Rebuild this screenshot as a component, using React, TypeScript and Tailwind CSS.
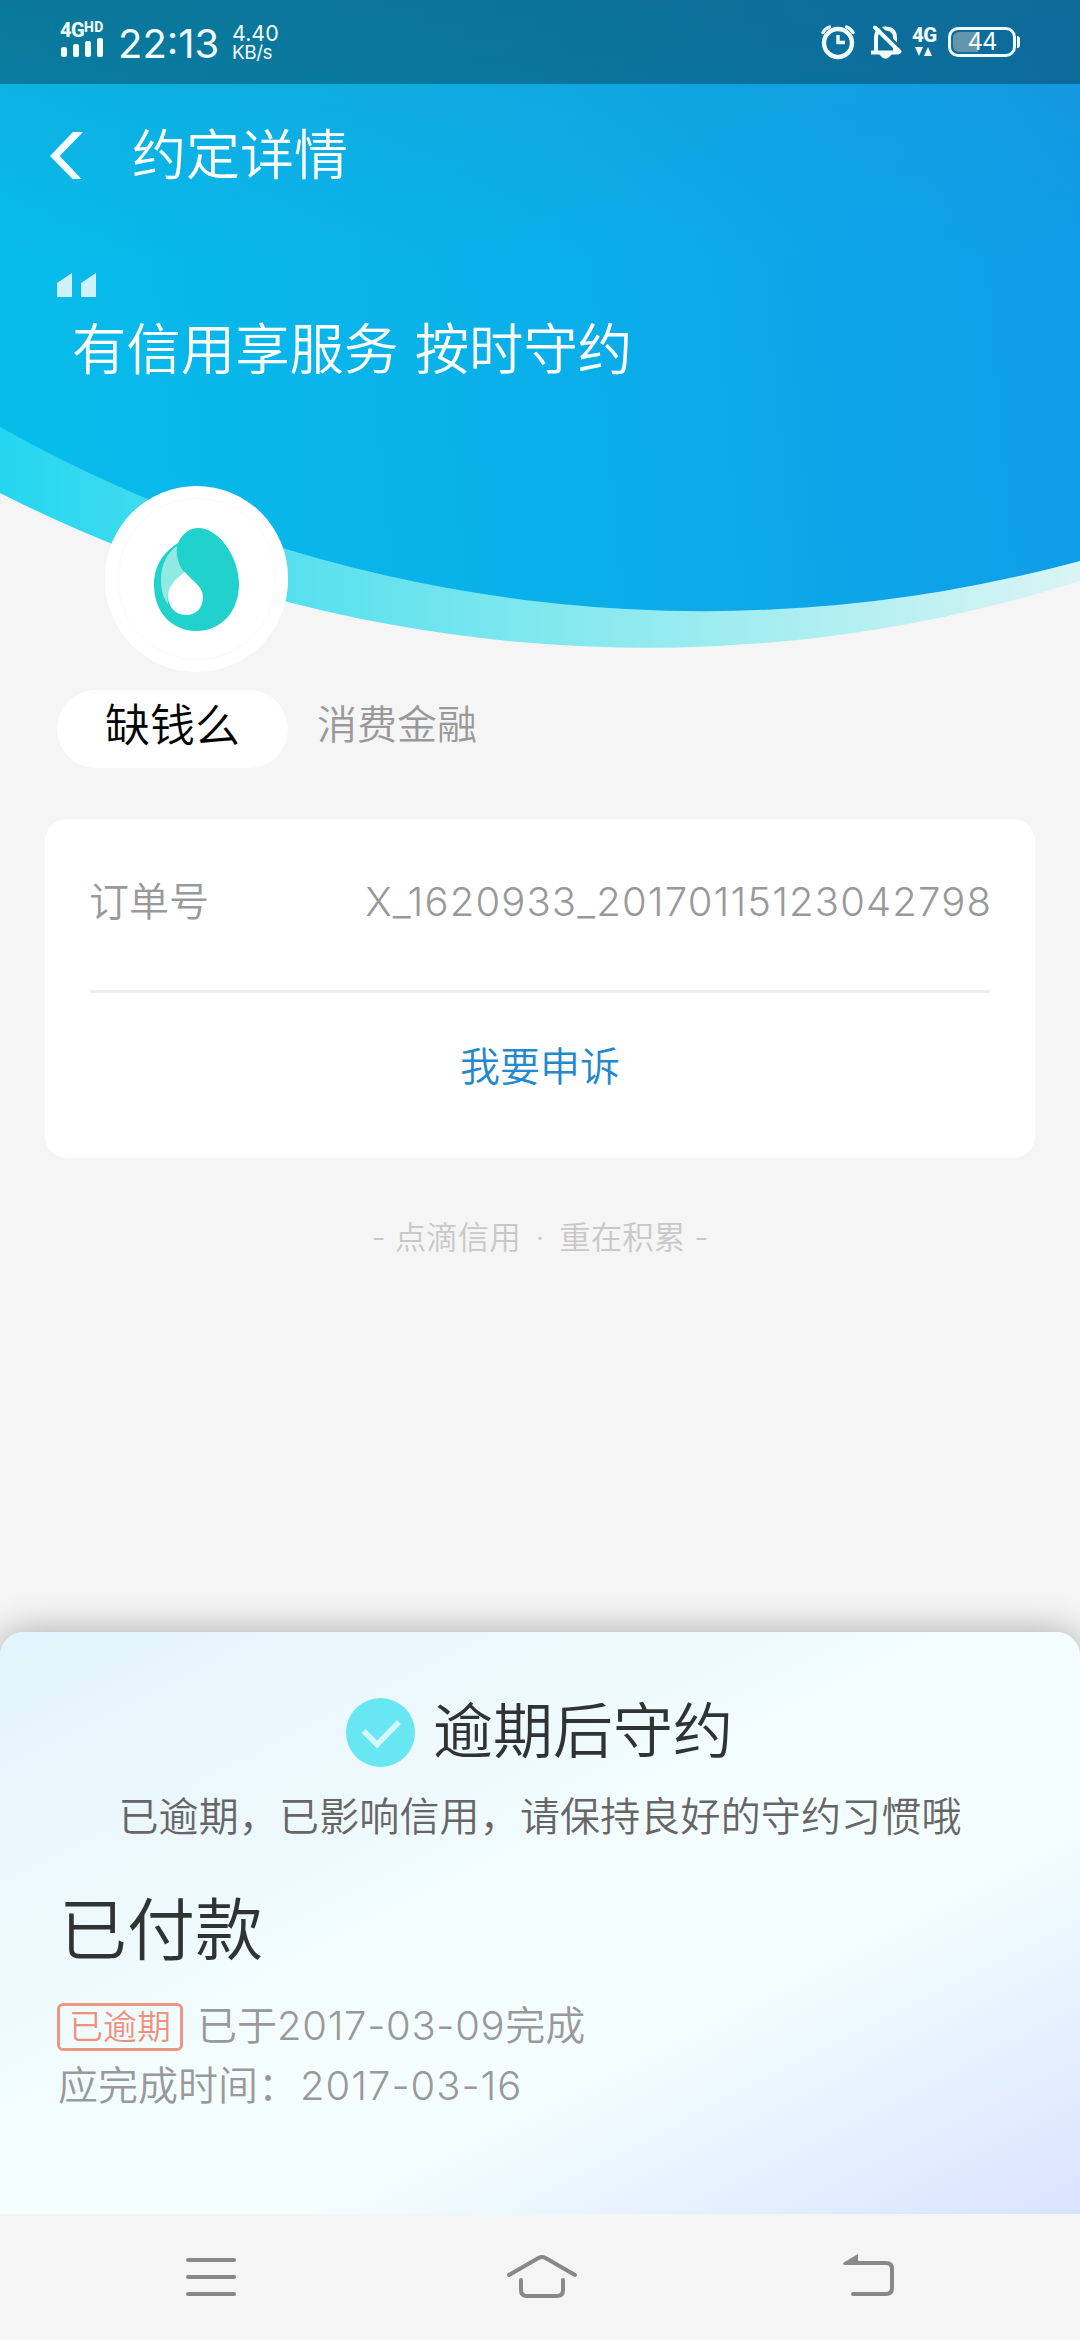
import React from "react";

function HeaderBackdrop() {
  return (
    <svg className="absolute left-0 top-0" width="1080" height="660" viewBox="0 0 1080 660" aria-hidden="true">
      <defs>
        <linearGradient id="sea" gradientUnits="userSpaceOnUse" x1="0" y1="260" x2="1080" y2="160">
          <stop offset="0" stopColor="#07bceb" />
          <stop offset="0.5" stopColor="#0aafe9" />
          <stop offset="1" stopColor="#0f9ce8" />
        </linearGradient>
        <linearGradient id="foam" gradientUnits="userSpaceOnUse" x1="0" y1="0" x2="1080" y2="0">
          <stop offset="0" stopColor="#25d6f0" />
          <stop offset="0.5" stopColor="#80e8ee" />
          <stop offset="1" stopColor="#daf4f4" />
        </linearGradient>
        <linearGradient id="dusk" x1="0" y1="0" x2="0" y2="1">
          <stop offset="0" stopColor="#2090c4" stopOpacity="0.32" />
          <stop offset="1" stopColor="#2090c4" stopOpacity="0" />
        </linearGradient>
      </defs>
      <path d="M0 0H1080V581A1432 1432 0 0 1 0 493Z" fill="url(#foam)" />
      <path d="M0 0H1080V561A1437 1437 0 0 1 0 427Z" fill="url(#sea)" />
      <rect width="1080" height="260" fill="url(#dusk)" />
    </svg>
  );
}

function StatusBar() {
  return (
    <div className="relative flex h-[84px] w-full items-start bg-black/30 pl-[60px] text-[#f2fdff]">
      <div className="mt-[21px] w-[46px]">
        <div className="flex h-[17px] items-start whitespace-nowrap font-['Roboto'] font-extrabold">
          <span className="w-[24px] text-[20px] leading-[19px] tracking-[-0.5px]">4G</span>
          <span className="text-[14px] leading-[12px] tracking-[0.5px]">HD</span>
        </div>
        <div className="flex h-[19px] items-end gap-[6px] pl-[1px]">
          <i className="h-[10px] w-[6px] rounded-[2px] bg-[#f2fdff]" />
          <i className="h-[13px] w-[6px] rounded-[2px] bg-[#f2fdff]" />
          <i className="h-[16px] w-[6px] rounded-[2px] bg-[#f2fdff]" />
          <i className="h-[19px] w-[6px] rounded-[2px] bg-[#f2fdff]" />
        </div>
      </div>
      <span className="ml-[12px] mt-[23px] w-[102px] whitespace-nowrap text-[40px] leading-[42px]">22:13</span>
      <div className="ml-[12px] mt-[23px] flex w-[60px] flex-col whitespace-nowrap text-[21.5px] leading-[20px]">
        <span>4.40</span>
        <span className="text-[19px] tracking-[-0.5px]">KB/s</span>
      </div>
      <svg className="ml-[529px] mt-[24px]" width="34" height="36" viewBox="0 0 34 36" fill="none" stroke="#f2fdff" strokeLinecap="round">
        <circle cx="17" cy="19" r="14" strokeWidth="4.4" />
        <path d="M17 11V18.5H24" strokeWidth="3.4" strokeLinecap="butt" />
        <path d="M2 8.5Q4 4.500 8.500 3M32 8.500Q30 4.500 25.500 3" strokeWidth="3.400" />
      </svg>
      <svg className="ml-[16px] mt-[24px]" width="32" height="36" viewBox="0 0 32 36" fill="none" stroke="#f2fdff" strokeWidth="4">
        <path d="M5 28V14Q5 4.500 14.500 4.500Q24 4.500 24 14V28" />
        <path d="M1 28.500H27" strokeLinecap="round" />
        <path d="M9.500 30.500Q14.500 37 19.500 30.500Z" fill="#f2fdff" strokeWidth="2" />
        <path d="M7 1L31 26" stroke="#0f6a94" strokeWidth="3" />
        <path d="M4 3.500L28.500 27.500" strokeLinecap="round" />
      </svg>
      <div className="ml-[9px] mt-[26px] flex w-[26px] flex-col">
        <span className="whitespace-nowrap font-['Roboto'] text-[20.5px] font-extrabold leading-[18px] tracking-[-0.5px]">4G</span>
        <svg className="mt-[3px]" width="24" height="9" viewBox="0 0 24 9" fill="#f2fdff">
          <path d="M3 0H11L7 9ZM12 9H20L16 0Z" />
        </svg>
      </div>
      <div className="ml-[10px] mt-[27px] flex items-center">
        <div className="relative flex h-[30px] w-[68px] items-center justify-center rounded-[10px] border-[3px] border-[#f2fdff]">
          <i className="absolute left-[2px] top-[2px] h-[20px] w-[25px] rounded-l-[6px] bg-[#6595ac]" />
          <span className="relative text-[24px] leading-[24px] tracking-[-1px]">44</span>
        </div>
        <i className="ml-px h-[12px] w-[3px] rounded-r-[3px] bg-[#f2fdff]" />
      </div>
    </div>
  );
}

function TopBar() {
  return (
    <div className="relative flex h-[142px] items-center pl-[50px] text-white">
      <svg width="33" height="47" viewBox="0 0 33 47" fill="#f4feff">
        <path d="M23 0H33L9.800 24L31.500 47H22.500L0 24Z" />
      </svg>
      <h1 className="ml-[49px] mt-[1px] text-[54px] leading-[60px]">约定详情</h1>
    </div>
  );
}

function DropLogo() {
  return (
    <svg width="86" height="103" viewBox="0 0 86 103">
      <path d="M24 15C29 4 37 0 44 0C65 0 85 29 85 56C85 85 66 103 42 103C18 103 0 84 0 57C0 37 10 24 24 15Z" fill="#20d2cb" />
      <path d="M23 18C13 25 7 37 7 51C7 62 9 70 14 76C12 62 18 54 31 45C24 37 22 28 23 18Z" fill="#90e9e3" />
      <path d="M31 44C37 52 49 58 49 69C49 80 42 87 32 87C21 87 14 78 14 68C14 57 23 50 31 44Z" fill="#fff" />
    </svg>
  );
}

function Merchant() {
  return (
    <div className="relative">
      <div className="ml-[105px] flex h-[186px] w-[183px] items-center justify-center rounded-full bg-white">
        <div className="flex h-[162px] w-[158px] items-center justify-center rounded-full border border-[#f6fbfc]">
          <DropLogo />
        </div>
      </div>
      <div className="ml-[57px] mt-[18px] flex h-[78px] items-center">
        <span className="flex h-[78px] w-[231px] items-center justify-center rounded-full bg-white pb-[7px] text-[45px] leading-[60px] text-black">
          缺钱么
        </span>
        <span className="ml-[29px] pb-[9px] text-[40px] leading-[60px] text-[#999]">消费金融</span>
      </div>
    </div>
  );
}

function OrderCard() {
  return (
    <div className="relative mx-[45px] mt-[51px] h-[339px] rounded-[22px] bg-white px-[45px]">
      <div className="flex h-[171px] items-center justify-between pb-[5px] text-[40px] leading-[60px] text-[#999]">
        <span className="ml-[-1px]">订单号</span>
        <span className="mr-[-2px] whitespace-nowrap text-right tracking-[1.15px]">X_1620933_20170115123042798</span>
      </div>
      <div className="h-[3px] bg-[#eee]" />
      <div className="flex h-[147px] items-center justify-center text-[40px] leading-[60px] text-[#2388cc]">我要申诉</div>
    </div>
  );
}

function ResultSheet() {
  return (
    <div className="relative h-[582px] rounded-t-[24px] bg-[linear-gradient(153deg,#e3f4fc_0%,#ecf8fd_25%,#f4feff_50%,#f4feff_64%,#d8e3ff_100%)] shadow-[0_0_36px_rgba(0,0,0,0.32)]">
      <div className="flex h-[135px] items-center justify-center pt-[66px]">
        <svg width="69" height="69" viewBox="0 0 69 69" fill="none">
          <circle cx="34.500" cy="34.500" r="34.500" fill="#68e7f2" />
          <path d="M17.500 33L31 46.500L53 24" stroke="#d3f8fc" strokeWidth="5.500" />
        </svg>
        <h2 className="mb-[3px] ml-[18px] mr-px text-[60px] leading-[66px] text-[#303333]">逾期后守约</h2>
      </div>
      <p className="mt-[20px] text-center text-[40px] leading-[60px] tracking-[0.15px] text-[#666]">已逾期，已影响信用，请保持良好的守约习惯哦</p>
      <h3 className="ml-[59px] mt-[43px] text-[68px] leading-[80px] text-[#303333]">已付款</h3>
      <div className="ml-[57px] mt-[27px] flex h-[60px] items-center text-[40px] leading-[60px] text-[#999]">
        <span className="flex h-[48px] w-[126px] items-center justify-center rounded-[6px] border-[3px] border-[#ec9683] text-[34px] leading-[42px] text-[#f0917c]">已逾期</span>
        <span className="mt-[-2px] ml-[14px] whitespace-nowrap">已于<span className="tracking-[0.700px]">2017-03-09</span>完成</span>
      </div>
      <div className="ml-[58px] mt-[-1px] whitespace-nowrap text-[40px] leading-[60px] text-[#999]">应完成时间：<span className="ml-[2px] tracking-[1px]">2017-03-16</span></div>
    </div>
  );
}

function NavBar() {
  return (
    <div className="relative flex h-[126px] bg-[#f5f5f5]">
      <svg className="ml-[186px] mt-[40px]" width="50" height="46" viewBox="0 0 50 46" fill="none" stroke="#888" strokeWidth="4" strokeLinecap="round">
        <path d="M2 6H48M2 23H48M2 40H48" />
      </svg>
      <svg className="ml-[270px] mt-[40px]" width="72" height="46" viewBox="0 0 72 46" fill="none" stroke="#888" strokeWidth="4" strokeLinecap="round">
        <path d="M3 21L32.500 4Q36 2 39.500 4L69 21" />
        <path d="M15 26V36Q15 42 21 42H51Q57 42 57 36V26" />
      </svg>
      <svg className="ml-[265px] mt-[40px]" width="52" height="46" viewBox="0 0 52 46" fill="none" stroke="#888" strokeWidth="4">
        <path d="M4 9H43Q49 9 49 15V34Q49 40 43 40H10" strokeLinecap="round" />
        <path d="M0 9L15 0V11H1Z" fill="#888" stroke="none" />
      </svg>
    </div>
  );
}

export default function App() {
  return (
    <main className="relative flex h-[2340px] w-[1080px] flex-col overflow-hidden bg-[#f5f5f5] font-['Inter','Noto_Sans_CJK_SC',sans-serif]">
      <HeaderBackdrop />
      <StatusBar />
      <div className="flex grow flex-col font-[350]">
        <TopBar />
        <div className="relative h-[260px] pt-[47px] text-white">
          <svg className="ml-[57px]" width="39" height="24" viewBox="0 0 39 24" fill="#ccf3fc">
            <path d="M0 10L15 0V24H0ZM24 10L39 0V24H24Z" />
          </svg>
          <p className="ml-[72px] mt-[22px] text-[54.4px] leading-[60px] [word-spacing:1px]">有信用享服务 按时守约</p>
        </div>
        <Merchant />
        <OrderCard />
        <p className="relative mt-[58px] whitespace-nowrap text-center text-[31.500px] leading-[44px] text-[#c8c8c8]">
          - 点滴信用<span className="[word-spacing:6px]"> · </span>重在积累 -
        </p>
        <div className="grow" />
        <ResultSheet />
      </div>
      <NavBar />
    </main>
  );
}
